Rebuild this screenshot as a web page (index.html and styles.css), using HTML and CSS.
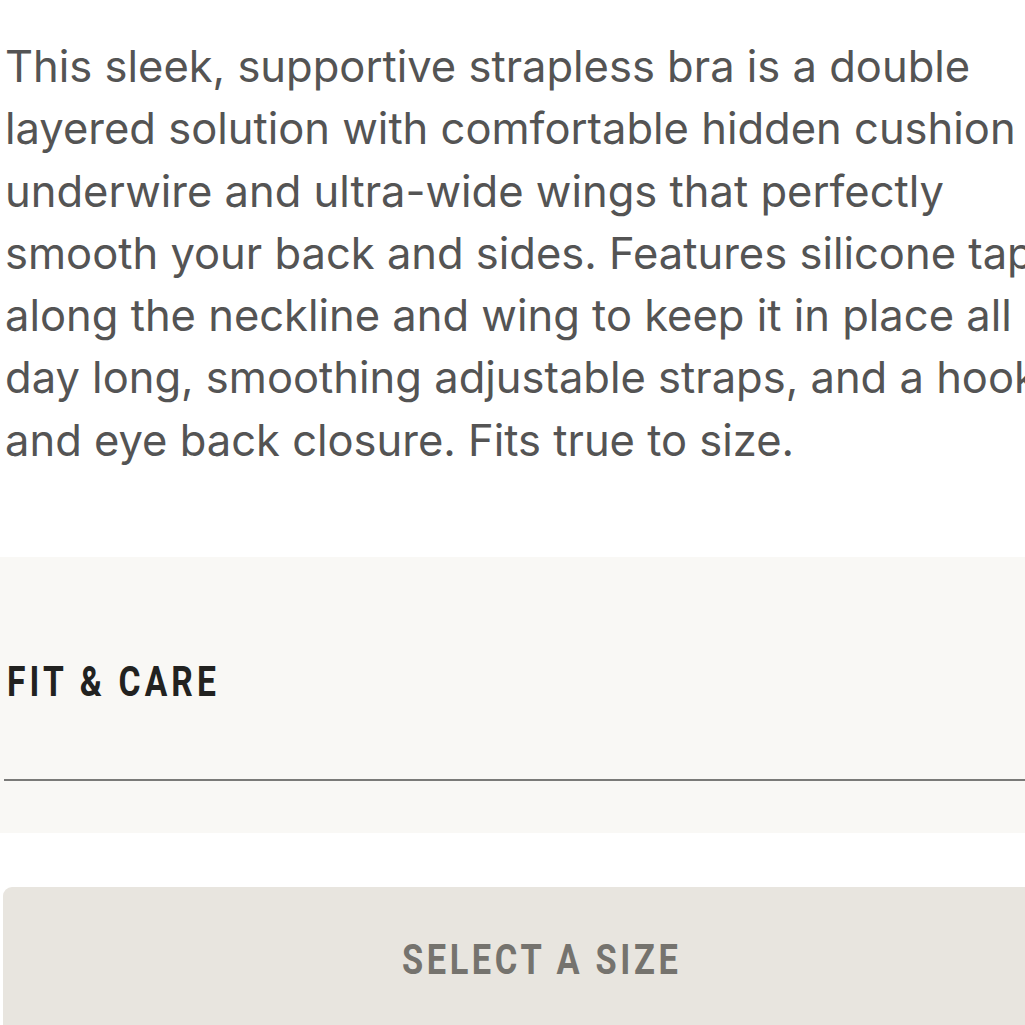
FILE: index.html
```html
<!DOCTYPE html>
<html>
<head>
<meta charset="utf-8">
<link rel="stylesheet" href="styles.css">
</head>
<body>
<div class="page">
  <p class="desc">This sleek, supportive strapless bra is a double<br>layered solution with comfortable hidden cushion<br>underwire and ultra-wide wings that perfectly<br>smooth your back and sides. Features silicone tape<br>along the neckline and wing to keep it in place all<br>day long, smoothing adjustable straps, and a hook<br>and eye back closure. Fits true to size.</p>
  <section class="fit">
    <h2 class="fit-title"><span class="fit-label">FIT &amp; CARE</span></h2>
    <div class="fit-rule"></div>
  </section>
  <button class="size-btn"><span class="size-label">SELECT A SIZE</span></button>
</div>
</body>
</html>
```
FILE: styles.css
```css
html, body {
  margin: 0;
  padding: 0;
  background: #ffffff;
  overflow: hidden;
}
.page {
  width: 1080px;
  height: 1025px;
  display: flex;
  flex-direction: column;
}
.page > * {
  flex-shrink: 0;
}
.desc {
  margin: 0;
  padding: 35px 0 0 5px;
  font-family: Inter, "Noto Sans", sans-serif;
  font-size: 43.5px;
  line-height: 62.3px;
  color: #545454;
  white-space: nowrap;
}
.fit {
  margin-top: 86px;
  background: #f9f8f5;
  height: 276px;
  padding: 0 0 0 4px;
  display: flex;
  flex-direction: column;
}
.fit-title {
  margin: 101px 0 0 3px;
  font-family: Roboto, "Liberation Sans", sans-serif;
  font-weight: bold;
  font-size: 42px;
  line-height: 48px;
  color: #222220;
}
.fit-label {
  display: inline-block;
  letter-spacing: 5.2px;
  transform: scaleX(0.8);
  transform-origin: left center;
}
.fit-rule {
  margin-top: 73px;
  height: 2px;
  background: #7a7a78;
}
.size-btn {
  margin: 54px 0 0 3px;
  height: 190px;
  border: none;
  border-radius: 9px 9px 0 0;
  background: #e8e5df;
  color: #75736e;
  font-family: Roboto, "Liberation Sans", sans-serif;
  font-weight: bold;
  font-size: 43px;
  padding: 0 0 46px 0;
}
.size-label {
  display: inline-block;
  letter-spacing: 4.5px;
  transform: scaleX(0.8);
}
```
